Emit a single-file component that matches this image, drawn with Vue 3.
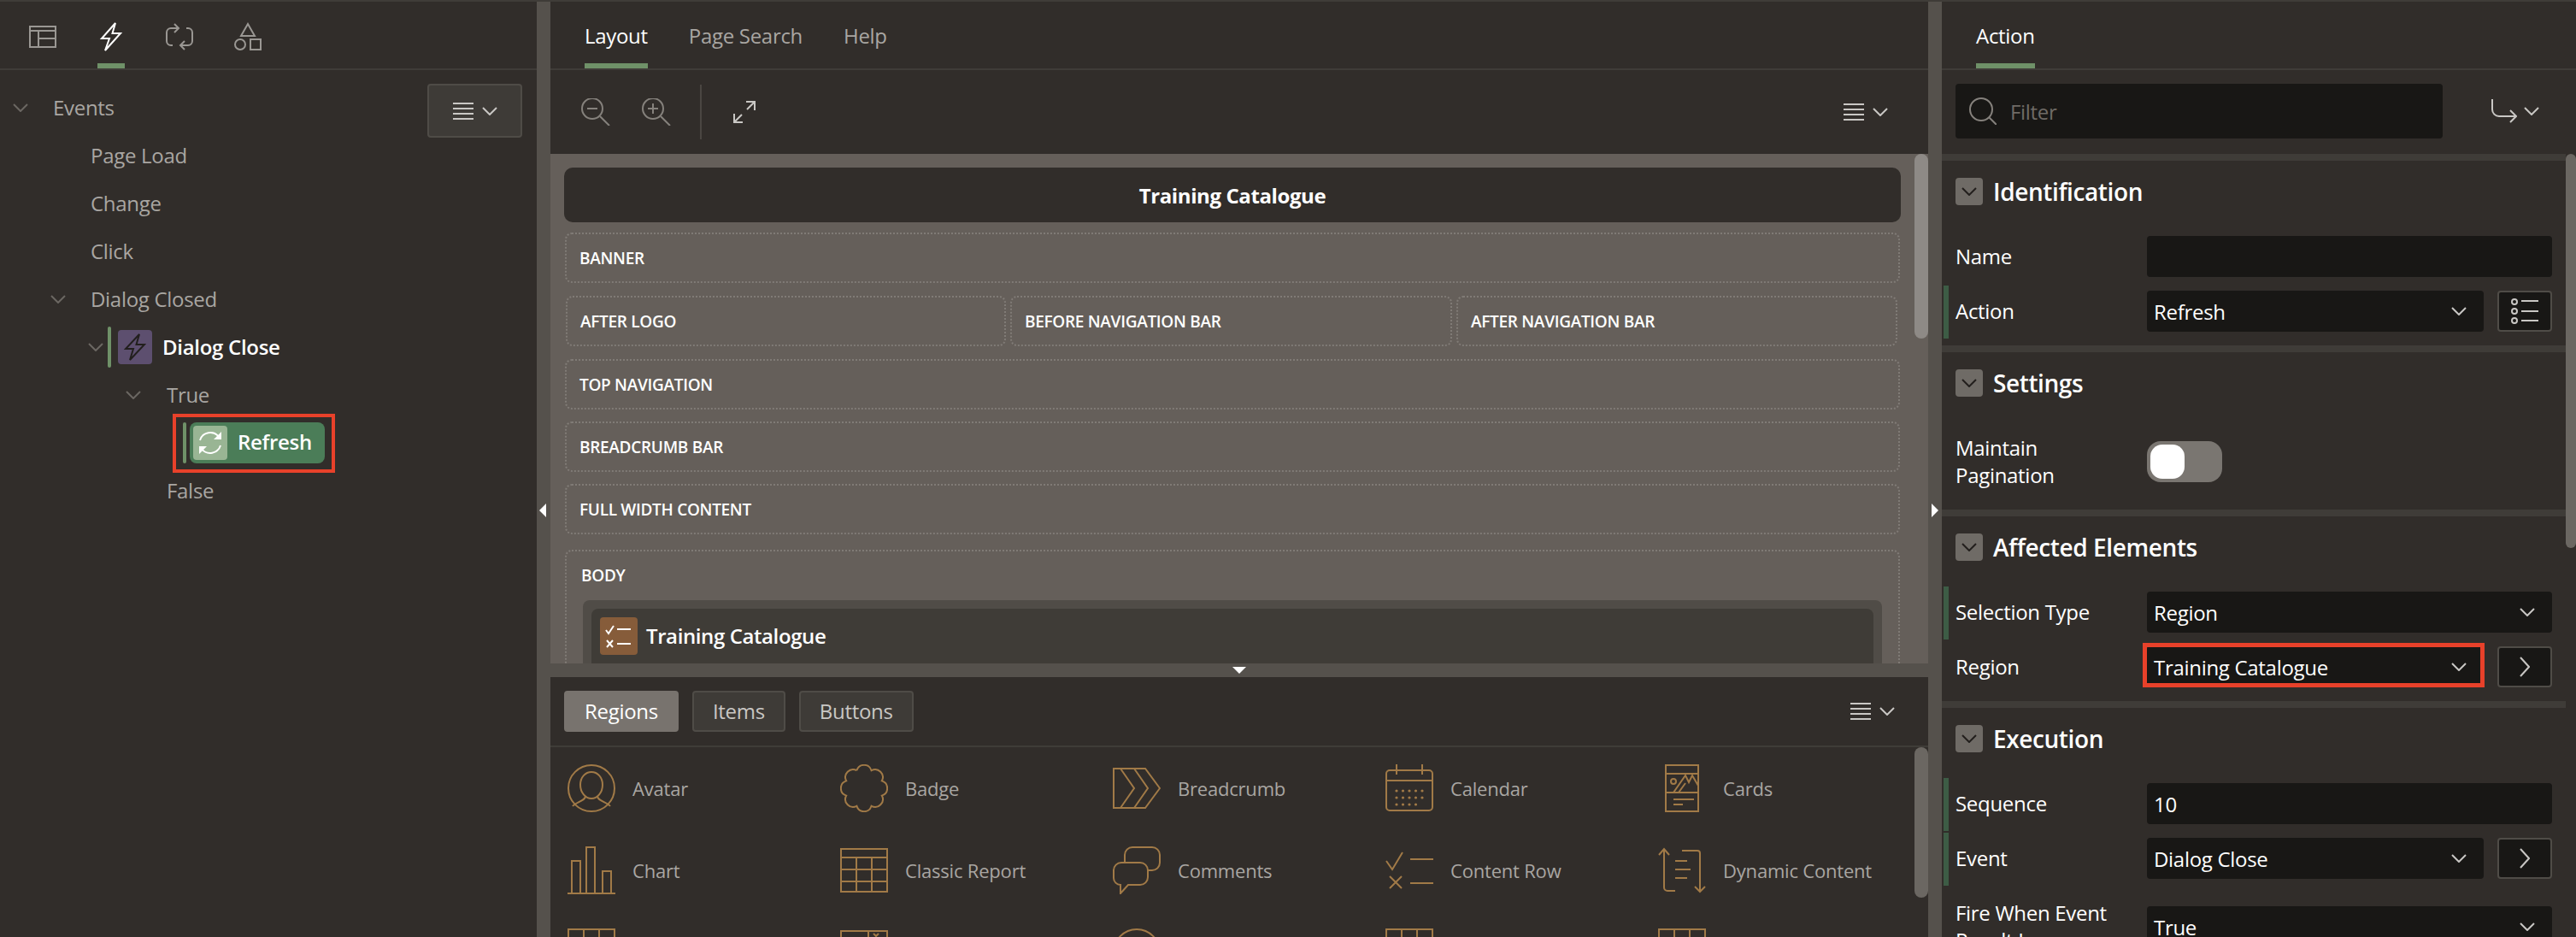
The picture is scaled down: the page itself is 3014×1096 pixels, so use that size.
<template>
  <div class="app">
    <!-- left: tree -->
    <section class="left">
      <div class="tabs icon-tabs">
        <div class="ic-tab">
          <svg width="32" height="32" viewBox="0 0 32 32" class="ico"><path d="M1 5h30v24H1zM1 10h30M11 10v19M11 19h20" /></svg>
        </div>
        <div class="ic-tab on">
          <svg width="32" height="34" viewBox="0 0 32 34" class="ico white"><path d="M21 1 5 19h9L9 33l18-20h-9.500z" /></svg>
        </div>
        <div class="ic-tab">
          <svg width="32" height="34" viewBox="0 0 32 34" class="ico"><path d="M14 7H6a5 5 0 0 0-5 5v10a5 5 0 0 0 5 5h2M10 2l5 5-5 5M18 27h8a5 5 0 0 0 5-5V12a5 5 0 0 0-5-5h-2M22 22l-5 5 5 5" /></svg>
        </div>
        <div class="ic-tab">
          <svg width="32" height="34" viewBox="0 0 32 34" class="ico"><path d="M16 2l8 14H8zM19 20h12v12H19z" /><circle cx="7" cy="26" r="6" /></svg>
        </div>
      </div>
      <div class="tree">
        <button class="tree-menu">
          <svg width="24" height="22" viewBox="0 0 24 22" class="ico pale"><path d="M0 2h24M0 8h24M0 14h24M0 20h24" /></svg>
          <svg width="18" height="10" viewBox="0 0 18 10" class="ico pale"><path d="M1 1l8 8 8-8" /></svg>
        </button>
        <div class="node lv0"><svg class="chev" width="18" height="10" viewBox="0 0 18 10"><path d="M1 1l8 8 8-8" /></svg><span>Events</span></div>
        <div class="node lv1"><i class="nochev"></i><span>Page Load</span></div>
        <div class="node lv1"><i class="nochev"></i><span>Change</span></div>
        <div class="node lv1"><i class="nochev"></i><span>Click</span></div>
        <div class="node lv1"><svg class="chev" width="18" height="10" viewBox="0 0 18 10"><path d="M1 1l8 8 8-8" /></svg><span>Dialog Closed</span></div>
        <div class="node lv2">
          <svg class="chev" width="18" height="10" viewBox="0 0 18 10"><path d="M1 1l8 8 8-8" /></svg>
          <i class="nbar"></i>
          <div class="tile purple">
            <svg width="26" height="32" viewBox="0 0 26 32" class="ico dark"><path d="M18 1 2 18h9L7 31l17-18h-9.500z" /></svg>
          </div>
          <b>Dialog Close</b>
        </div>
        <div class="node lv3"><svg class="chev" width="18" height="10" viewBox="0 0 18 10"><path d="M1 1l8 8 8-8" /></svg><span>True</span></div>
        <div class="node lv4">
          <div class="hl">
            <i class="nbar"></i>
            <div class="pill">
              <div class="tile sage">
                <svg width="30" height="30" viewBox="0 0 30 30" class="ico white">
                  <path d="M3 12A12.500 12.500 0 0 1 25 8M27 18A12.500 12.500 0 0 1 5 22" />
                  <path class="solid" d="M28 2v9h-9zM2 28v-9h9z" />
                </svg>
              </div>
              <b>Refresh</b>
            </div>
          </div>
        </div>
        <div class="node lv3"><i class="nochev"></i><span>False</span></div>
      </div>
    </section>

    <div class="split-v"><i class="tri-l"></i></div>

    <!-- middle: layout + gallery -->
    <section class="mid">
      <div class="tabs">
        <div class="tab on">Layout</div>
        <div class="tab">Page Search</div>
        <div class="tab">Help</div>
      </div>
      <div class="toolbar">
        <svg width="34" height="32" viewBox="0 0 34 32" class="ico dim"><circle cx="13" cy="12" r="12" /><path d="M7 12h12M22 21l11 11" /></svg>
        <svg width="34" height="32" viewBox="0 0 34 32" class="ico dim zoom-in"><circle cx="13" cy="12" r="12" /><path d="M7 12h12M13 6v12M22 21l11 11" /></svg>
        <i class="tb-sep"></i>
        <svg width="28" height="28" viewBox="0 0 28 28" class="ico pale"><path d="M17 11 26 2M16 2h10v10M11 17l-9 9M2 16v10h10" /></svg>
        <div class="grow"></div>
        <div class="menu-ic mr1">
          <svg width="24" height="20" viewBox="0 0 24 20" class="ico pale"><path d="M0 1h24M0 7h24M0 13h24M0 19h24" /></svg>
          <svg width="18" height="10" viewBox="0 0 18 10" class="ico pale"><path d="M1 1l8 8 8-8" /></svg>
        </div>
      </div>
      <div class="canvas">
        <div class="titlebar">Training Catalogue</div>
        <div class="slot wide-gap">BANNER</div>
        <div class="slot-row">
          <div class="slot">AFTER LOGO</div>
          <div class="slot">BEFORE NAVIGATION BAR</div>
          <div class="slot">AFTER NAVIGATION BAR</div>
        </div>
        <div class="slot">TOP NAVIGATION</div>
        <div class="slot">BREADCRUMB BAR</div>
        <div class="slot">FULL WIDTH CONTENT</div>
        <div class="slot body-slot">
          <div class="body-label">BODY</div>
          <div class="region-out">
            <div class="region-in">
              <div class="tile brown">
                <svg width="32" height="28" viewBox="0 0 32 28" class="ico white"><path d="M1 7l3 4 6-9M14 6h16M2 19l7 8M9 19l-7 8M14 23h16" /></svg>
              </div>
              <b>Training Catalogue</b>
            </div>
          </div>
        </div>
        <div class="thumb canvas-thumb"></div>
      </div>
      <div class="split-h"><i class="tri-d"></i></div>
      <div class="bottom">
        <div class="gal-bar">
          <div class="gbtn on">Regions</div>
          <div class="gbtn">Items</div>
          <div class="gbtn">Buttons</div>
          <div class="grow"></div>
          <div class="menu-ic mr2">
            <svg width="24" height="20" viewBox="0 0 24 20" class="ico pale"><path d="M0 1h24M0 7h24M0 13h24M0 19h24" /></svg>
            <svg width="18" height="10" viewBox="0 0 18 10" class="ico pale"><path d="M1 1l8 8 8-8" /></svg>
          </div>
        </div>
        <div class="gallery">
          <div v-for="(g, i) in gallery" :key="i" class="gal">
            <svg width="56" height="56" viewBox="0 0 56 56" class="gal-ic">
              <path :d="g.d" />
              <circle v-for="p in g.dots || []" :key="p[0] + '-' + p[1]" class="dot" :cx="p[0]" :cy="p[1]" r="1.600" />
            </svg>
            <span v-if="g.label">{{ g.label }}</span>
          </div>
        </div>
        <div class="thumb gal-thumb"></div>
      </div>
    </section>

    <div class="split-v"><i class="tri-r"></i></div>

    <!-- right: property editor -->
    <section class="right">
      <div class="tabs">
        <div class="tab on">Action</div>
      </div>
      <div class="filter-row">
        <div class="filter">
          <svg width="32" height="32" viewBox="0 0 32 32" class="ico dim"><circle cx="14" cy="14" r="13" /><path d="M23 23l9 9" /></svg>
          <span>Filter</span>
        </div>
        <div class="goto">
          <svg width="30" height="28" viewBox="0 0 30 28" class="ico pale"><path d="M1 0v12a8 8 0 0 0 8 8h20M22 13l7 7-7 7" /></svg>
          <svg width="18" height="10" viewBox="0 0 18 10" class="ico pale"><path d="M1 1l8 8 8-8" /></svg>
        </div>
      </div>
      <div class="props">
        <div v-for="s in sections" :key="s.title" class="sec">
          <div class="sec-head">
            <div class="sec-tog">
              <svg width="18" height="10" viewBox="0 0 18 10" class="ico dark"><path d="M1 1l8 8 8-8" /></svg>
            </div>
            <h3>{{ s.title }}</h3>
          </div>
          <div v-for="r in s.rows" :key="r.label" class="row" :class="{ req: r.req, tall: r.tall }">
            <label :class="{ narrow: r.tall }">{{ r.label }}</label>
            <div class="ctl-wrap">
              <div v-if="r.type === 'switch'" class="switch"><i></i></div>
              <div v-else class="ctl" :class="{ hot: r.hot }">
                <span>{{ r.value }}</span>
                <svg v-if="r.type === 'select'" width="18" height="10" viewBox="0 0 18 10" class="ico pale"><path d="M1 1l8 8 8-8" /></svg>
              </div>
              <div v-if="r.side" class="side">
                <svg v-if="r.side === 'list'" width="32" height="30" viewBox="0 0 32 30" class="ico pale"><circle cx="4" cy="4" r="3" /><circle cx="4" cy="15" r="3" /><circle cx="4" cy="26" r="3" /><path d="M12 3h20M12 15h20M12 26h20" /></svg>
                <svg v-else width="12" height="24" viewBox="0 0 12 24" class="ico pale"><path d="M1 1l10 11L1 23" /></svg>
              </div>
            </div>
          </div>
        </div>
      </div>
      <div class="thumb prop-thumb"></div>
    </section>
  </div>
</template>

<script setup>
// eight-lobed outline for the Badge icon
function badgePath() {
  let d = ''
  for (let i = 0; i <= 8; i++) {
    const a = (Math.PI / 4) * i - Math.PI / 2 - Math.PI / 8
    const x = (28 + 22.5 * Math.cos(a)).toFixed(1)
    const y = (28 + 22.5 * Math.sin(a)).toFixed(1)
    d += i === 0 ? `M${x} ${y}` : `A9 9 0 0 1 ${x} ${y}`
  }
  return d
}

const calDots = []
for (let y = 31; y <= 47; y += 8) {
  for (let x = 13; x <= 45; x += 7.5) {
    if (y === 47 && x > 38) continue
    calDots.push([x, y])
  }
}

const gallery = [
  { label: 'Avatar', d: 'M28 1a27 27 0 1 0 0 54a27 27 0 1 0 0-54M28 9c-7 0-13 6-13 15s6 16 13 16s13-7 13-16s-6-15-13-15M21 37c0 6-11 7-15 12M35 37c0 6 11 7 15 12' },
  { label: 'Badge', d: badgePath() },
  { label: 'Breadcrumb', d: 'M1 5h37l17 23-17 23H1zM9 5l16 23L9 51M25 5l16 23-16 23' },
  { label: 'Calendar', d: 'M5 7h46a4 4 0 0 1 4 4v39a4 4 0 0 1-4 4H5a4 4 0 0 1-4-4V11a4 4 0 0 1 4-4zM1 19h54M13 0v12M43 0v12', dots: calDots },
  { label: 'Cards', d: 'M9 1h38v54H9zM9 11h38M9 33h38M18 33l14-20 4 8 4-8 7 12M24 33l8-11M18 47h11M18 41h24M21 20a3 3 0 1 0-6 0a3 3 0 1 0 6 0' },
  { label: 'Chart', d: 'M0 55h56M5 55V17h10v38M22 55V1h10v54M41 55V29h10v26' },
  { label: 'Classic Report', d: 'M1 3h54v50H1zM1 13h54M1 27h54M1 41h54M19 13v40M37 13v40' },
  { label: 'Comments', d: 'M14 19v-9a9 9 0 0 1 9-9h23a9 9 0 0 1 9 9v9a9 9 0 0 1-9 9h-4M10 19h22a9 9 0 0 1 9 9v8a9 9 0 0 1-9 9H18l-9 10V45a8 8 0 0 1-8-8v-9a9 9 0 0 1 9-9z' },
  { label: 'Content Row', d: 'M1 17l7 10L20 7M29 15h27M29 43h27M5 35l14 14M19 35L5 49' },
  { label: 'Dynamic Content', d: 'M7 3v45a4 4 0 0 0 4 4h9M1 10l6-7 6 7M28 5h18a3 3 0 0 1 3 3v45M43 47l6 6 6-6M20 17h14M20 27h18M20 37h14' },
  { d: 'M1 1h54v55H1zM1 14h54M19 1v55M37 1v55' },
  { d: 'M1 3h54v53H1zM33 3v53M1 16h54M39 6l6 6M45 6l-6 6' },
  { d: 'M1 28a27 27 0 0 1 54 0v28M1 28v28' },
  { d: 'M1 1h54v55H1zM1 14h54M19 1v55M37 1v55' },
  { d: 'M1 1h54v55H1zM1 14h54M19 1v55M37 1v55' }
]

const sections = [
  {
    title: 'Identification',
    rows: [
      { label: 'Name', type: 'text', value: '' },
      { label: 'Action', type: 'select', value: 'Refresh', req: true, side: 'list' }
    ]
  },
  {
    title: 'Settings',
    rows: [{ label: 'Maintain Pagination', type: 'switch', tall: true }]
  },
  {
    title: 'Affected Elements',
    rows: [
      { label: 'Selection Type', type: 'select', value: 'Region', req: true },
      { label: 'Region', type: 'select', value: 'Training Catalogue', side: 'go', hot: true }
    ]
  },
  {
    title: 'Execution',
    rows: [
      { label: 'Sequence', type: 'text', value: '10', req: true },
      { label: 'Event', type: 'select', value: 'Dialog Close', req: true, side: 'go' },
      { label: 'Fire When Event Result Is', type: 'select', value: 'True', tall: true }
    ]
  }
]
</script>

<style>
html, body { margin: 0; background: #312d2a; overflow: hidden; }
</style>

<style scoped>
.app {
  display: flex; width: 3014px; height: 1096px; overflow: hidden;
  background: #312d2a; color: #a9a6a2; position: relative;
  font-family: "Open Sans", "Noto Sans", sans-serif; font-size: 24px; letter-spacing: -0.3px;
  border-top: 2px solid #3f3c38; box-sizing: border-box;
}
.grow { flex: 1; }
.ico { fill: none; stroke: #9a9793; stroke-width: 2; flex: none; }
.ico.white { stroke: #fff; }
.ico.pale { stroke: #c9c7c4; }
.ico.dim { stroke: #85817c; }
.ico.dark { stroke: #221f1d; }
.ico .solid { fill: #fff; stroke: none; }

.left { width: 628px; flex: none; }
.mid { width: 1612px; flex: none; display: flex; flex-direction: column; }
.right { flex: 1; position: relative; display: flex; flex-direction: column; }
.split-v { width: 16px; flex: none; background: #55514c; position: relative; }
.tri-l, .tri-r {
  position: absolute; top: 587px; width: 0; height: 0;
  border-top: 8px solid transparent; border-bottom: 8px solid transparent;
}
.tri-l { left: 3px; border-right: 8px solid #fff; }
.tri-r { left: 4px; border-left: 8px solid #fff; }

.tabs {
  height: 78px; display: flex; padding-left: 40px; gap: 48px; flex: none;
  border-bottom: 2px solid #3f3c38; box-sizing: content-box;
}
.tab { height: 78px; line-height: 80px; box-sizing: border-box; }
.tab.on { color: #fff; border-bottom: 6px solid #6f9168; }
.icon-tabs { padding-left: 34px; }
.ic-tab { width: 32px; height: 78px; display: flex; justify-content: center; padding-top: 24px; box-sizing: border-box; }
.ic-tab.on { border-bottom: 6px solid #6f9168; }

/* tree */
.tree { position: relative; padding-top: 16px; }
.tree-menu {
  position: absolute; top: 16px; left: 500px; width: 111px; height: 63px; box-sizing: border-box;
  background: #3e3b37; border: 2px solid #4f4c47; border-radius: 4px;
  display: flex; align-items: center; justify-content: center; gap: 10px; padding: 0;
}
.node { height: 56px; display: flex; align-items: center; }
.node span, .node b { position: relative; top: -1px; }
.node b { color: #fff; font-weight: 600; }
.chev { fill: none; stroke: #6b6762; stroke-width: 2; flex: none; margin-right: 29px; }
.nochev { width: 18px; margin-right: 29px; flex: none; }
.lv0 { padding-left: 15px; }
.lv1 { padding-left: 59px; }
.lv2 { padding-left: 103px; }
.lv3 { padding-left: 147px; }
.lv2 .chev { margin-right: 5px; }
.lv3 .chev, .lv3 .nochev { margin-right: 30px; }
.lv4 { padding-left: 202px; }
.nbar { width: 4px; background: #6f9168; border-radius: 2px; flex: none; align-self: stretch; }
.lv2 .nbar { height: 48px; align-self: center; margin-right: 8px; }
.tile { display: flex; align-items: center; justify-content: center; border-radius: 4px; flex: none; }
.tile.purple { width: 40px; height: 40px; background: #5d4f6f; margin-right: 12px; }
.tile.sage { width: 40px; height: 40px; background: #99b594; }
.tile.brown { width: 44px; height: 44px; background: #865c3a; }
.hl {
  width: 190px; height: 69px; box-sizing: border-box; border: 4px solid #e8412a;
  padding: 6px 8px 7px; display: flex; gap: 4px; flex: none;
}
.pill {
  flex: 1; background: #4b7d58; border-radius: 8px; padding-left: 4px;
  display: flex; align-items: center; gap: 12px;
}

/* toolbar */
.toolbar { height: 98px; flex: none; display: flex; align-items: center; padding-left: 36px; box-sizing: border-box; }
.zoom-in { margin-left: 37px; }
.tb-sep { width: 2px; height: 64px; background: #4a4642; margin: 0 36px 0 34px; }
.menu-ic { display: flex; align-items: center; gap: 10px; }
.mr1 { margin-right: 47px; }
.mr2 { margin-right: 39px; }

/* canvas */
.canvas {
  height: 596px; flex: none; background: #655f5a; overflow: hidden; position: relative;
  padding: 16px 32px 0 16px; box-sizing: border-box; color: #fff;
}
.titlebar {
  height: 64px; background: #312d2a; border-radius: 10px; margin-bottom: 12px;
  display: flex; align-items: center; justify-content: center; font-weight: 700; letter-spacing: -0.4px;
}
.slot {
  height: 59px; border: 2px dotted #807b76; border-radius: 8px; box-sizing: border-box;
  margin: 0 1px 14px; padding-left: 15px; display: flex; align-items: center;
  font-size: 19px; font-weight: 600;
}
.slot.wide-gap { margin-bottom: 15px; }
.slot-row { display: grid; grid-template-columns: 515px 517px 516px; gap: 5px; margin: 0 2px; }
.slot-row .slot { margin: 0 0 15px; }
.body-slot { height: 300px; display: block; padding: 0 17px; margin-top: 18px; }
.body-label { height: 57px; line-height: 57px; }
.region-out { background: #504c47; padding: 10px 10px 0; border-radius: 8px; height: 200px; margin: 0 2px; }
.region-in {
  background: #3f3c37; border-radius: 8px; padding: 10px; height: 180px;
  display: flex; align-items: flex-start; gap: 10px; font-size: 24px; letter-spacing: -0.4px;
}
.region-in b { font-weight: 600; line-height: 44px; }
.thumb { position: absolute; right: 0; width: 16px; border-radius: 8px; }
.canvas-thumb { top: 0; height: 216px; background: #8e8a86; }

.split-h { height: 16px; flex: none; background: #55514c; position: relative; }
.tri-d {
  position: absolute; left: 798px; top: 4px; width: 0; height: 0;
  border-left: 8px solid transparent; border-right: 8px solid transparent; border-top: 8px solid #fff;
}

/* gallery */
.bottom { flex: 1; position: relative; overflow: hidden; }
.gal-bar {
  height: 64px; box-sizing: content-box; padding: 16px 0 0 16px; display: flex; gap: 16px;
  border-bottom: 2px solid #3f3c38; align-items: flex-start;
}
.gbtn {
  height: 48px; box-sizing: border-box; padding: 0 22px; display: flex; align-items: center;
  background: #3e3b37; border: 2px solid #4f4c47; border-radius: 4px; color: #c9c7c4; line-height: 1;
}
.gbtn.on { background: #78736e; border-color: #78736e; color: #fff; }
.gal-bar .menu-ic { margin-top: 14px; }
.gallery {
  display: grid; grid-template-columns: repeat(5, 319px); grid-auto-rows: 56px;
  row-gap: 40px; padding: 20px 0 0 20px;
}
.gal { display: flex; align-items: center; gap: 20px; font-size: 22px; letter-spacing: -0.2px; }
.gal-ic { fill: none; stroke: #a17a47; stroke-width: 2; flex: none; }
.gal-ic .dot { fill: #a17a47; stroke: none; }
.gal-thumb { top: 82px; height: 176px; background: #6b6762; }

/* property editor */
.filter-row { height: 98px; flex: none; display: flex; align-items: flex-start; padding: 16px 0 0 16px; box-sizing: border-box; }
.filter {
  width: 570px; height: 64px; background: #181715; border-radius: 4px; display: flex;
  align-items: center; box-sizing: border-box; padding-left: 16px; gap: 16px; color: #6f6b66;
}
.goto { margin-left: 57px; height: 64px; display: flex; align-items: center; gap: 8px; }
.props { flex: 1; overflow: hidden; padding-right: 12px; }
.sec { border-top: 8px solid #3f3c38; padding: 20px 0 8px; }
.sec-head { display: flex; align-items: center; gap: 12px; height: 32px; margin-bottom: 28px; padding-left: 16px; }
.sec-tog {
  width: 32px; height: 32px; background: #6f6b66; border-radius: 4px;
  display: flex; align-items: center; justify-content: center;
}
.sec-head h3 { margin: 0; font-size: 28px; font-weight: 600; color: #fff; letter-spacing: -0.4px; }
.row {
  height: 64px; display: flex; align-items: center; padding: 0 16px; position: relative;
  color: #fff;
}
.row.tall { height: 96px; }
.row.req::before {
  content: ''; position: absolute; left: 2px; top: 2px; bottom: 0; width: 6px; background: #3d5c45;
}
.row label { width: 224px; flex: none; line-height: 32px; box-sizing: border-box; }
.row label.narrow { padding-right: 30px; }
.ctl-wrap { flex: 1; display: flex; gap: 16px; }
.ctl {
  flex: 1; height: 48px; background: #181715; border-radius: 4px; display: flex; align-items: center;
  justify-content: space-between; padding: 0 20px 0 8px; box-sizing: border-box; position: relative;
}
.ctl.hot::after {
  content: ''; position: absolute; left: -5px; right: -1px; top: -4px; bottom: 0;
  border: 5px solid #e8412a; pointer-events: none;
}
.side {
  width: 64px; height: 48px; flex: none; background: #181715; border: 2px solid #4f4c47; border-radius: 4px;
  display: flex; align-items: center; justify-content: center; box-sizing: border-box;
}
.switch { width: 88px; height: 48px; background: #7a7671; border-radius: 16px; padding: 4px; box-sizing: border-box; }
.switch i { display: block; width: 40px; height: 40px; background: #fff; border-radius: 14px; }
.prop-thumb { right: 0; top: 178px; width: 12px; height: 461px; background: #6b6762; }
</style>
